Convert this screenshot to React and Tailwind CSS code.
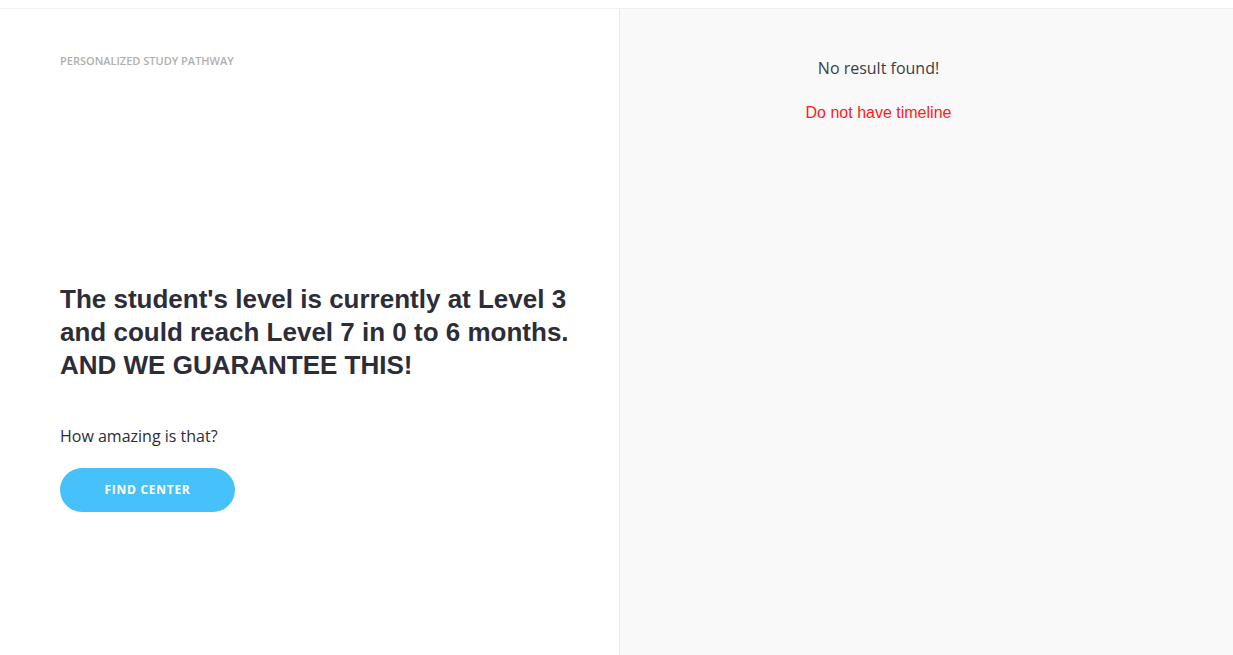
export default function App() {
  return (
    <div className="flex h-[655px] flex-col bg-white font-['Open_Sans',sans-serif]">
      {/* thin top bar */}
      <div className="h-[9px] shrink-0 border-b border-[#f0f0f0] bg-white" />

      <div className="flex flex-1">
        {/* left: pathway summary */}
        <div className="flex w-[620px] shrink-0 flex-col border-r border-[#e8e8e8] bg-white px-[60px] pt-[44px]">
          <p className="text-[11px] font-semibold uppercase leading-[15px] text-[#b0b0b0]">
            Personalized Study Pathway
          </p>

          <h1 className="mt-[215px] whitespace-nowrap font-['Liberation_Sans',Arial,sans-serif] text-[26px] font-bold leading-[33px] text-[#2d2d37]">
            The student's level is currently at Level 3
            <br />
            and could reach Level 7 in 0 to 6 months.
            <br />
            AND WE GUARANTEE THIS!
          </h1>

          <p className="mt-[43px] text-[16px] leading-[22px] text-[#2d2d37]">How amazing is that?</p>

          <button className="mt-[21px] flex h-[44px] w-[175px] items-center justify-center rounded-full bg-[#46c1fa] text-[12px] font-bold tracking-[0.06em] text-white">
            FIND CENTER
          </button>
        </div>

        {/* right: timeline */}
        <div className="flex flex-1 flex-col items-center bg-[#f9f9f9] pr-[96px] pt-[48px]">
          <p className="text-[16px] leading-[22px] text-[#3a3d47]">No result found!</p>
          <p className="mt-[23px] font-['Liberation_Sans',Arial,sans-serif] text-[16px] leading-[22px] text-[#ff1a1a]">
            Do not have timeline
          </p>
        </div>
      </div>
    </div>
  );
}
